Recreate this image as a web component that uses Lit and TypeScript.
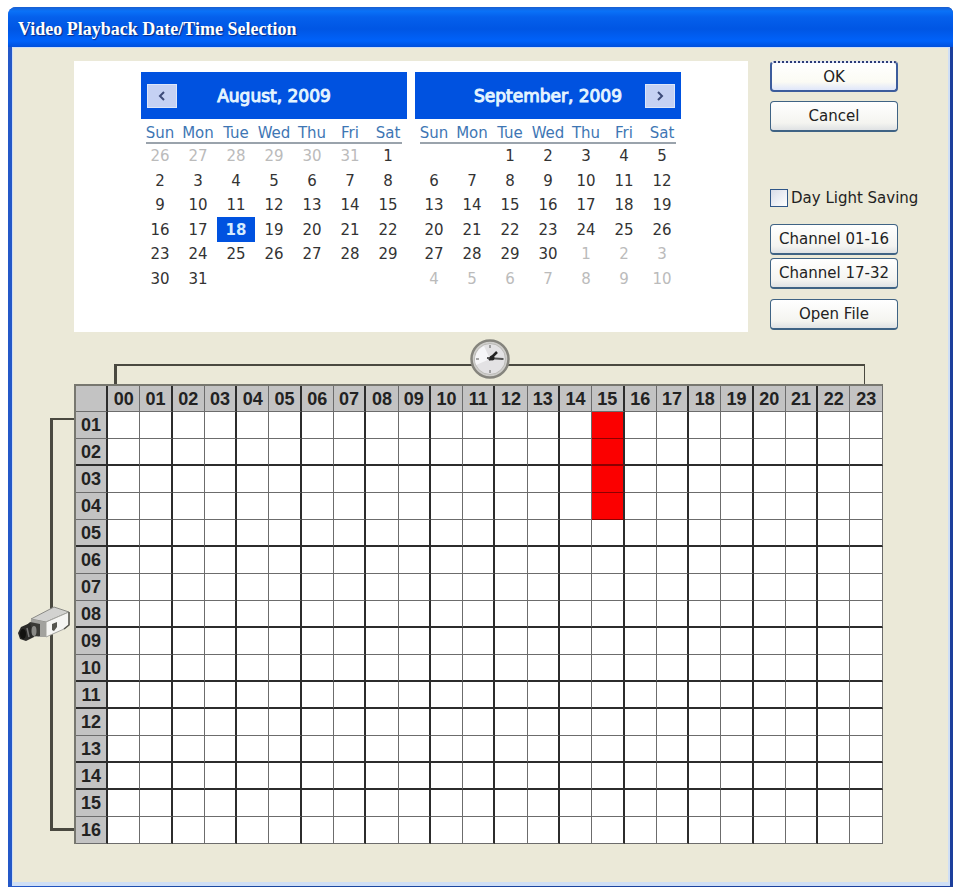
import { LitElement, html, svg, css } from "lit";
import { customElement, property } from "lit/decorators.js";
import { classMap } from "lit/directives/class-map.js";

const WEEKDAYS = ["Sun", "Mon", "Tue", "Wed", "Thu", "Fri", "Sat"];
const HEAVY_CHANNELS = [2, 5, 8, 10, 11, 13, 14];
const pad = (n: number) => String(n).padStart(2, "0");

interface Day {
  label: string;
  muted?: boolean;
  selected?: boolean;
}

const range = (from: number, to: number, extra: Partial<Day> = {}): Day[] =>
  Array.from({ length: to - from + 1 }, (_, i) => ({ label: String(from + i), ...extra }));
const blanks = (n: number): Day[] => Array.from({ length: n }, () => ({ label: "" }));

const AUGUST: Day[] = [
  ...range(26, 31, { muted: true }),
  ...range(1, 17),
  ...range(18, 18, { selected: true }),
  ...range(19, 31),
  ...blanks(5),
];
const SEPTEMBER: Day[] = [...blanks(2), ...range(1, 30), ...range(1, 10, { muted: true })];

@customElement("month-view")
export class MonthView extends LitElement {
  @property() heading = "";
  @property() nav: "prev" | "next" = "prev";
  @property({ attribute: false }) days: Day[] = [];

  static styles = css`
    :host {
      display: block;
      font-family: "DejaVu Sans", sans-serif;
      font-size: 15px;
    }
    .head {
      display: grid;
      grid-template-columns: 30px 1fr 30px;
      align-items: center;
      height: 47px;
      padding: 0 6px;
      background: #0052e0;
      color: #e4f4ff;
    }
    .title {
      grid-column: 2;
      grid-row: 1;
      margin: 0;
      font-size: 17px;
      font-weight: 400;
      text-align: center;
      white-space: nowrap;
      -webkit-text-stroke: 1px currentColor;
    }
    .nav {
      grid-row: 1;
      height: 24px;
      padding: 0;
      border: 1px solid #dce6fa;
      background: #c5d1f3;
      display: grid;
      place-items: center;
    }
    .prev {
      grid-column: 1;
    }
    .next {
      grid-column: 3;
    }
    .grid {
      width: 100%;
      table-layout: fixed;
      border-collapse: collapse;
      margin-top: 3px;
    }
    .grid th {
      height: 22px;
      padding: 0;
      color: #3e76b4;
      font-weight: 400;
      line-height: 20px;
      background: linear-gradient(#9aa3ac, #9aa3ac) bottom / 100% 2px no-repeat;
    }
    .grid th:first-child {
      background-position: 5px bottom;
    }
    .grid th:last-child {
      background-position: -5px bottom;
    }
    .grid td {
      height: 24px;
      padding: 0;
      text-align: center;
      color: #333;
      line-height: 24px;
    }
    .grid tr:nth-child(even) td {
      height: 25px;
    }
    .grid td.muted {
      color: #bbb;
    }
    .grid td.selected {
      background: #0052e0;
      color: #d6ecff;
      font-weight: 700;
    }
  `;

  render() {
    const weeks = Array.from({ length: 6 }, (_, w) => this.days.slice(w * 7, w * 7 + 7));
    return html`
      <div class="head">
        <button class="nav ${this.nav}" aria-label=${this.nav === "prev" ? "Previous month" : "Next month"}>
          <svg width="10" height="12" viewBox="0 0 10 12" fill="none" stroke="#3c4a78" stroke-width="2">
            ${this.nav === "prev" ? svg`<path d="M7 2L3 6L7 10" />` : svg`<path d="M3 2L7 6L3 10" />`}
          </svg>
        </button>
        <h2 class="title">${this.heading}</h2>
      </div>
      <table class="grid">
        <thead>
          <tr>${WEEKDAYS.map((d) => html`<th scope="col">${d}</th>`)}</tr>
        </thead>
        <tbody>
          ${weeks.map(
            (week) => html`<tr>
              ${week.map(
                (d) => html`<td class=${classMap({ muted: !!d.muted, selected: !!d.selected })}>${d.label}</td>`
              )}
            </tr>`
          )}
        </tbody>
      </table>
    `;
  }
}

@customElement("app-root")
export class AppRoot extends LitElement {
  static styles = css`
    :host {
      display: flex;
      box-sizing: border-box;
      min-height: 100vh;
      padding: 7px 3px 0 8px;
      background: #fff;
      font-family: "DejaVu Sans", sans-serif;
      font-size: 15px;
      color: #222;
    }
    .window {
      flex: 1;
      display: flex;
      flex-direction: column;
      background: linear-gradient(90deg, #2458c8, #1c4aa0 20%, #1c3f9c);
      border-radius: 8px 6px 0 0;
      overflow: hidden;
    }
    .titlebar {
      height: 40px;
      box-sizing: border-box;
      padding: 0 10px;
      background: linear-gradient(#1a5fd0, #0a72f8 4px, #0560ec 10px, #0056e4 22px, #0062fa 34px, #0050dc);
    }
    .caption {
      margin: 0;
      font: bold 18px/44px "Liberation Serif", serif;
      color: #fff;
      text-shadow: 1px 1px 1px #0a2a80;
      white-space: nowrap;
    }
    .client {
      flex: 1;
      margin: 0 3px 3px 4px;
      border: solid #cfdff6;
      border-width: 1px 2px 4px 1px;
      background: #ebe9d8;
    }
    .upper {
      display: flex;
      gap: 22px;
      padding: 13px 30px 0 61px;
    }
    .calendars {
      flex: 1;
      display: flex;
      justify-content: center;
      gap: 8px;
      height: 260px;
      padding-top: 11px;
      background: #fff;
    }
    .month {
      width: 266px;
    }
    .actions {
      width: 148px;
      display: flex;
      flex-direction: column;
      align-items: flex-start;
    }
    .btn {
      box-sizing: border-box;
      width: 128px;
      height: 31px;
      padding: 0;
      border: 1px solid #3f6384;
      border-bottom-width: 2px;
      border-radius: 4px;
      background: linear-gradient(#fff, #f4f4f0 75%, #dfe2e4);
      font: 15px "DejaVu Sans", sans-serif;
      color: #222;
      white-space: nowrap;
    }
    .default {
      border: 2px solid #3c5c9c;
      border-top: 2px dotted #2c3c78;
      background: linear-gradient(#fff, #fbfbf4 70%, #dfe6fa);
    }
    .cancel {
      margin-top: 9px;
    }
    .dst {
      display: flex;
      align-items: center;
      gap: 3px;
      margin: 55px 0 15px;
      height: 22px;
      white-space: nowrap;
    }
    .box {
      appearance: none;
      width: 18px;
      height: 18px;
      margin: 0;
      border: 1px solid #2f5688;
      background: linear-gradient(135deg, #d8dce8, #fff);
    }
    .second {
      margin-top: 3px;
    }
    .open {
      margin-top: 10px;
    }
    .schedule {
      display: grid;
      grid-template-columns: 56px 1fr;
      padding: 7px 65px 38px 5px;
    }
    .hours {
      grid-column: 2;
      height: 45px;
      display: grid;
      justify-items: center;
      margin: 0 18px 0 40px;
    }
    .hours-line {
      grid-area: 1 / 1;
      justify-self: stretch;
      margin-top: 25px;
      border: solid #4a4940;
      border-width: 2px 1px 0 3px;
    }
    .clock {
      grid-area: 1 / 1;
    }
    .channels {
      display: grid;
      align-items: center;
      padding: 34px 0 13px;
    }
    .channels-line {
      grid-area: 1 / 1;
      align-self: stretch;
      margin-left: 32px;
      border: solid #4a4940;
      border-width: 2px 0 3px 3px;
    }
    .camera {
      grid-area: 1 / 1;
    }
    .slots {
      width: 100%;
      table-layout: fixed;
      border-collapse: separate;
      border-spacing: 0;
      border-top: 2px solid #77776f;
      border-left: 2px solid #77776f;
      background: #fff;
    }
    .slots th,
    .slots td {
      box-sizing: border-box;
      height: 27px;
      padding: 0;
      border-right: 1px solid #6c6c6c;
      border-bottom: 1px solid #6c6c6c;
    }
    .slots thead th {
      height: 26px;
    }
    .slots th {
      background: #c3c3c3;
      font: bold 18px/24px "Liberation Sans", sans-serif;
      color: #222;
    }
    .slots .corner {
      width: 32px;
    }
    .slots .major {
      border-right: 2px solid #2c2c2c;
    }
    .slots .heavy > * {
      border-bottom: 2px solid #2c2c2c;
    }
    .slots .recorded {
      background: #fb0000;
      border-bottom-color: #8c0000;
    }
  `;

  private clock() {
    const ticks = Array.from({ length: 4 }, (_, i) => i * 90);
    return svg`<svg class="clock" width="40" height="40" viewBox="0 0 40 40" aria-hidden="true">
      <circle cx="20" cy="20" r="18.5" fill="#cfcecb" stroke="#85847d" stroke-width="2.5" />
      <circle cx="20" cy="20" r="15.5" fill="#e3e2e4" stroke="#bbbab6" stroke-width="1" />
      <path d="M6 26A15 15 0 0 1 14 7L20 20Z" fill="#f6f6f8" />
      ${ticks.map((a) => svg`<path d="M20 6V9" stroke="#888" stroke-width="1.5" transform="rotate(${a} 20 20)" />`)}
      <path d="M19 21L27 13" stroke="#222" stroke-width="2.5" />
      <path d="M17 19L33 20" stroke="#555" stroke-width="2" />
      <circle cx="22" cy="19" r="2.5" fill="#222" />
    </svg>`;
  }

  private camera() {
    return svg`<svg class="camera" width="52" height="38" viewBox="0 0 52 38" aria-hidden="true">
      <path d="M13 13L36 1L51 6L28 16Z" fill="#d2d2d0" stroke="#8a8a86" stroke-width="1" />
      <path d="M28 16L51 6V19L46 23L28 31Z" fill="#f5f5f3" stroke="#a5a5a0" stroke-width="1" />
      <path d="M51 6V19L46 23" fill="none" stroke="#55554f" stroke-width="1.5" />
      <path d="M13 13L28 16V31L20 31L12 25Z" fill="#a2a29e" />
      <path d="M34 18L39 16V21L36 25L34 24Z" fill="#55554f" />
      <path d="M12 16L22 18V30L10 31L8 20Z" fill="#3a3a36" />
      <path d="M3 21L12 17L16 31L8 35L2 33L0 27Z" fill="#2a2a28" />
      <ellipse cx="16" cy="25" rx="2.5" ry="5" fill="#8a8a86" />
      <ellipse cx="5" cy="28" rx="3" ry="5" fill="#11110f" />
      <path d="M9 22L11 31" stroke="#777" stroke-width="1.5" />
    </svg>`;
  }

  render() {
    const hours = Array.from({ length: 24 }, (_, i) => i);
    const channels = Array.from({ length: 16 }, (_, i) => i + 1);
    return html`
      <main class="window">
        <header class="titlebar"><h1 class="caption">Video Playback Date/Time Selection</h1></header>
        <div class="client">
          <section class="upper">
            <div class="calendars">
              <month-view class="month" heading="August, 2009" nav="prev" .days=${AUGUST}></month-view>
              <month-view class="month" heading="September, 2009" nav="next" .days=${SEPTEMBER}></month-view>
            </div>
            <div class="actions">
              <button class="btn default">OK</button>
              <button class="btn cancel">Cancel</button>
              <label class="dst"><input class="box" type="checkbox" />Day Light Saving</label>
              <button class="btn">Channel 01-16</button>
              <button class="btn second">Channel 17-32</button>
              <button class="btn open">Open File</button>
            </div>
          </section>
          <section class="schedule">
            <div class="hours"><div class="hours-line"></div>${this.clock()}</div>
            <div class="channels"><div class="channels-line"></div>${this.camera()}</div>
            <table class="slots">
              <thead>
                <tr>
                  <th class="corner major"></th>
                  ${hours.map((h) => html`<th scope="col" class=${classMap({ major: h % 2 === 1 && h < 23 })}>${pad(h)}</th>`)}
                </tr>
              </thead>
              <tbody>
                ${channels.map(
                  (c) => html`<tr class=${classMap({ heavy: HEAVY_CHANNELS.includes(c) })}>
                    <th scope="row" class="major">${pad(c)}</th>
                    ${hours.map(
                      (h) => html`<td
                        class=${classMap({ major: h % 2 === 1 && h < 23, recorded: h === 15 && c <= 4 })}
                      ></td>`
                    )}
                  </tr>`
                )}
              </tbody>
            </table>
          </section>
        </div>
      </main>
    `;
  }
}
